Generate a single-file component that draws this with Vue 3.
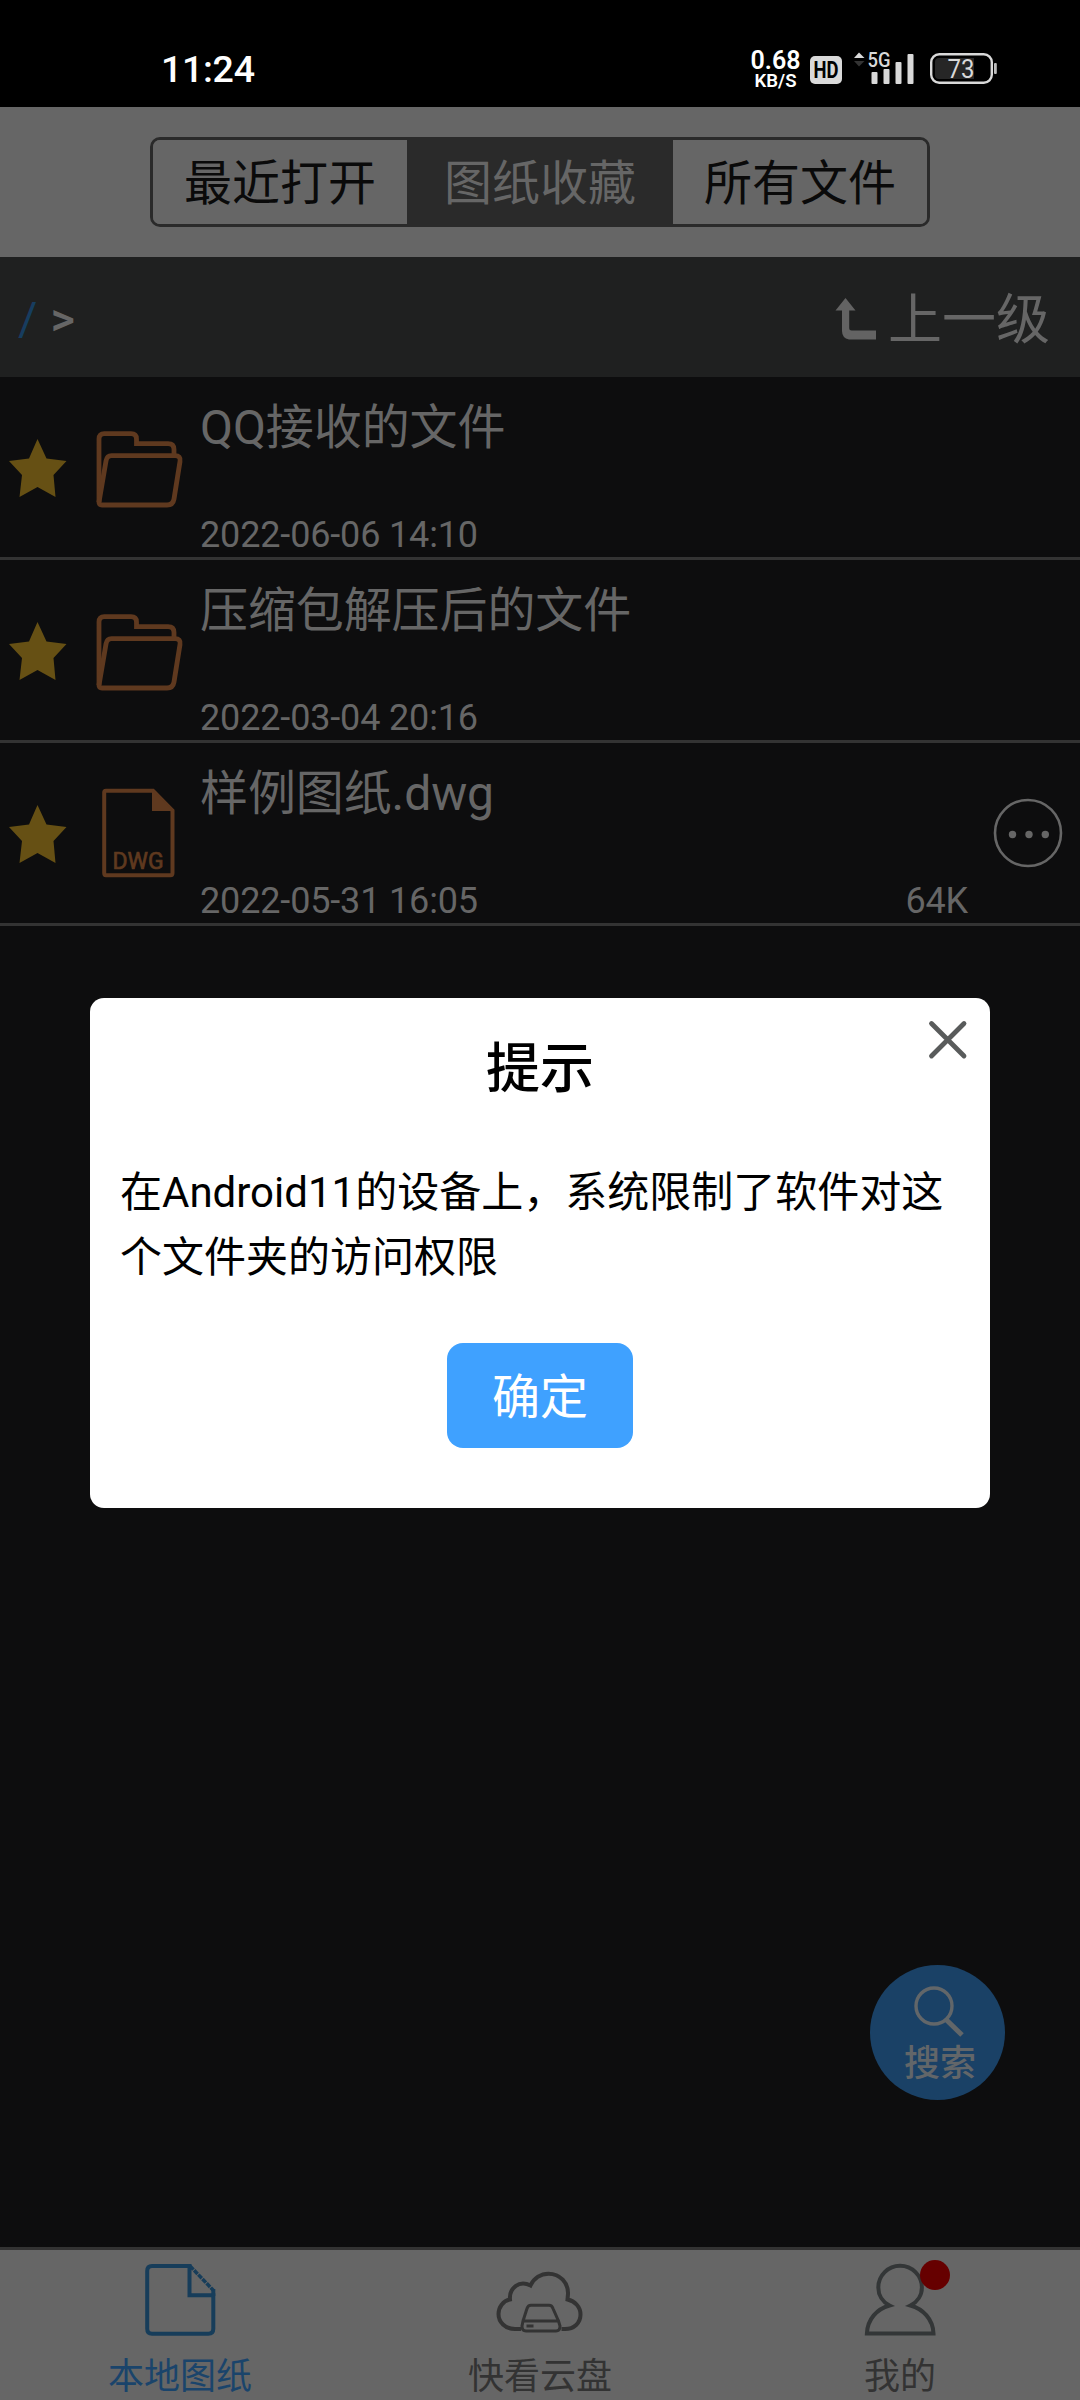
<script setup>
import { ref } from 'vue'

const tabs = ['最近打开', '图纸收藏', '所有文件']
const activeTab = ref(1)
const files = [
  { name: 'QQ接收的文件', date: '2022-06-06 14:10', type: 'folder' },
  { name: '压缩包解压后的文件', date: '2022-03-04 20:16', type: 'folder' },
  { name: '样例图纸.dwg', date: '2022-05-31 16:05', type: 'dwg', size: '64K' },
]
</script>

<template>
  <div class="screen">
    <header class="status">
      <span class="clock">11:24</span>
      <svg class="indicators" width="250" height="50" viewBox="750 45 250 50">
        <g fill="#fff" font-weight="600">
          <text x="750.5" y="69" font-size="25.500" textLength="50" lengthAdjust="spacingAndGlyphs">0.68</text>
          <text x="754.5" y="86.500" font-size="18.500" textLength="42" lengthAdjust="spacingAndGlyphs">KB/S</text>
        </g>
        <rect x="810" y="56" width="32" height="28" rx="5" fill="#d9d9d9" />
        <text x="813.5" y="78" font-size="23" font-weight="700" textLength="25" lengthAdjust="spacingAndGlyphs" fill="#000">HD</text>
        <path d="M854 58L859 52.500L864.500 58Z" fill="#d9d9d9" />
        <path d="M854 61H864.500L859 66.500Z" fill="#333" />
        <text x="867.5" y="67" font-size="21" font-weight="500" textLength="23" lengthAdjust="spacingAndGlyphs" fill="#d9d9d9">5G</text>
        <g fill="#d9d9d9">
          <rect x="871.5" y="72" width="6" height="12" rx="1" />
          <rect x="883.5" y="69" width="6" height="15" rx="1" />
          <rect x="895.5" y="62" width="6" height="22" rx="1" />
          <rect x="907.5" y="54" width="6" height="30" rx="1" />
        </g>
        <rect x="931.2" y="54.200" width="60.600" height="28.600" rx="8" fill="none" stroke="#d9d9d9" stroke-width="2.400" />
        <path d="M939 58H974V79H939Q935 79 935 75V62Q935 58 939 58Z" fill="#262626" />
        <text x="947.5" y="77.500" font-size="26" textLength="27" lengthAdjust="spacingAndGlyphs" fill="#d9d9d9">73</text>
        <rect x="994" y="63" width="2.800" height="11" rx="1" fill="#bbb" />
      </svg>
    </header>

    <div class="topbar">
      <div class="segments">
        <button
          v-for="(tab, i) in tabs"
          :key="tab"
          class="segment"
          :class="{ active: i === activeTab }"
          @click="activeTab = i"
        >{{ tab }}</button>
      </div>
    </div>

    <div class="pathbar">
      <div class="crumbs"><span class="root">/</span><span class="sep">&gt;</span></div>
      <div class="up">
        <svg width="44" height="44" viewBox="0 0 44 44">
          <path d="M11.500 1L21.500 13.500H15.200V31Q15.200 33.500 17.700 33.500H42V42.500H15Q8 41 8 34V13.500H1.500Z" fill="#636363" />
        </svg>
        <span>上一级</span>
      </div>
    </div>

    <main class="list">
      <article v-for="file in files" :key="file.name" class="row">
        <svg class="star" width="58" height="60" viewBox="0 0 58 60">
          <path d="M28.500 1L37.500 20.500L57.500 23L44.500 37L46.500 59L28.500 49L10.500 59L13 37L0 23L20 20.500Z" fill="#665014" />
        </svg>
        <div class="kind">
          <svg v-if="file.type === 'folder'" width="90" height="80" viewBox="0 0 90 80" fill="none" stroke="#5f391f" stroke-width="4.800">
            <path d="M4 72V9Q4 3.700 9.300 3.700H36Q41.500 3.700 41.500 9V13.700H73Q79 13.700 79 19.500V26" />
            <path d="M4 72L11 31Q12 25.700 16.500 25.700H80Q86 25.700 85 31.500L79 69Q78 75 72 75H7Q4 75 4 72Z" />
          </svg>
          <svg v-else class="dwg" width="78" height="94" viewBox="0 0 78 94">
            <path d="M6 4.700H53L72.500 24.500V87Q72.500 89.200 70.500 89.200H6Q4.200 89.200 4.200 87V6.500Q4.200 4.700 6 4.700Z" fill="none" stroke="#5f391f" stroke-width="4" />
            <path d="M52 4L74 25H52Z" fill="#5f391f" />
            <text x="12.500" y="82.500" font-size="23" textLength="51" lengthAdjust="spacingAndGlyphs" fill="#5f391f" stroke="#5f391f" stroke-width=".7">DWG</text>
          </svg>
        </div>
        <div class="info">
          <div class="name">{{ file.name }}</div>
          <div class="meta"><span>{{ file.date }}</span><span>{{ file.size }}</span></div>
        </div>
        <div class="more">
          <svg v-if="file.size" width="70" height="70" viewBox="0 0 70 70" fill="#666">
            <circle cx="35" cy="35" r="33" fill="none" stroke="#666" stroke-width="2.600" />
            <circle cx="19.500" cy="36.500" r="3.700" /><circle cx="36" cy="36.500" r="3.700" /><circle cx="52.300" cy="36.500" r="3.700" />
          </svg>
        </div>
      </article>
    </main>

    <nav class="nav">
      <div class="nav-item current">
        <svg width="74" height="76" viewBox="0 0 74 76" fill="none" stroke="#173d5a" stroke-width="4">
          <path d="M46.500 4H9Q4.200 4 4.200 9V66.700Q4.200 71.700 9 71.700H65.300Q70.300 71.700 70.300 66.700V33.300H46.500Z" />
          <path d="M70.300 34V27" />
          <path d="M47 4L70 28" stroke-width="3.500" stroke-dasharray="5 1" />
        </svg>
        <span>本地图纸</span>
      </div>
      <div class="nav-item">
        <svg class="cloud" width="90" height="64" viewBox="0 0 90 64" fill="none" stroke="#333" stroke-width="4">
          <path d="M26 59H20C10 59 3.500 52 3.500 44C3.500 37 8 31 15 29.500C14 18.500 24 9.500 35.500 15.500C39 8 46 3.700 53.500 3.700C65 3.700 73.500 13 73 24L72.500 29.500C80 31 85.500 37 85.500 44.500C85.500 53 79 59 70 59H66.500" />
          <path d="M28 51L32 38.500Q33 35.300 36 35.300H54Q57 35.300 58 38.500L63.500 51M28 51H63.500L65 56Q65 61 61 61H31Q27 61 27 56Z" stroke-width="3" />
          <path d="M31.500 56H38.500" stroke-width="3" />
        </svg>
        <span>快看云盘</span>
      </div>
      <div class="nav-item">
        <div class="avatar">
          <svg width="74" height="76" viewBox="0 0 74 76" fill="none" stroke="#333637" stroke-width="4">
            <path d="M26.500 43.500C19.500 40 15.300 33 15.300 25.500A21.800 21.800 0 0 1 58.900 25.500C58.900 33 54.500 40 47.500 43.500C60 47 70 57 70.500 71.500H3.900C4.500 57 14 47 26.500 43.500Z" />
          </svg>
          <i class="badge"></i>
        </div>
        <span>我的</span>
      </div>
    </nav>

    <button class="search">
      <svg width="54" height="54" viewBox="0 0 54 54" fill="none" stroke="#626669">
        <circle cx="21" cy="21" r="18" stroke-width="3.400" />
        <path d="M33 34.500L49 50" stroke-width="5" />
      </svg>
      <span>搜索</span>
    </button>

    <section class="dialog">
      <svg class="close" width="40" height="40" viewBox="0 0 40 40" stroke="#595b5b" stroke-width="4.800" stroke-linecap="round">
        <path d="M3.500 3.500L36 36M36 3.500L3.500 36" />
      </svg>
      <h2>提示</h2>
      <p>在Android11的设备上，系统限制了软件对这个文件夹的访问权限</p>
      <button class="ok">确定</button>
    </section>
  </div>
</template>

<style>
body {
  background: #0c0d0e;
}
</style>

<style scoped>
* {
  box-sizing: border-box;
}
.screen {
  position: relative;
  display: flex;
  flex-direction: column;
  width: 1080px;
  height: 2400px;
  overflow: hidden;
  background: #0d0d0e;
  color: #666;
  font-family: Roboto, "Noto Sans CJK SC", sans-serif;
}
svg {
  display: block;
  flex: none;
}
button {
  padding: 0;
  border: 0;
  font-family: inherit;
}
.status {
  display: flex;
  justify-content: space-between;
  align-items: flex-start;
  height: 107px;
  padding: 45px 80px 0 161px;
  background: #000;
}
.clock {
  color: #fff;
  font-size: 37.5px;
  font-weight: 500;
  line-height: 48px;
  letter-spacing: -0.3px;
}
.topbar {
  display: flex;
  justify-content: center;
  align-items: flex-start;
  height: 150px;
  padding-top: 30px;
  background: #666;
}
.segments {
  display: grid;
  grid-template-columns: 254px 266px 254px;
  width: 780px;
  height: 90px;
  border: 3px solid #2a2a2a;
  border-radius: 10px;
  overflow: hidden;
}
.segment {
  padding-top: 4px;
  background: #666;
  color: #0a0a0a;
  font-size: 48px;
  line-height: 80px;
}
.segment.active {
  background: #2a2a2a;
  color: #666;
}
.segment:not(.active) {
  padding-top: 4px;
}
.pathbar {
  display: flex;
  justify-content: space-between;
  align-items: center;
  height: 120px;
  padding: 0 30px 0 18px;
  background: #1f2020;
}
.crumbs {
  display: flex;
  gap: 13px;
  padding-top: 3px;
  font-size: 47px;
  line-height: 60px;
}
.root {
  color: #173d5f;
}
.sep {
  font-weight: 500;
}
.up {
  display: flex;
  align-items: center;
  gap: 10px;
  font-size: 54px;
  line-height: 72px;
}
.up svg {
  margin-top: 4px;
}
.up span {
  padding-top: 7px;
}
.list {
  flex: 1;
}
.row {
  display: flex;
  align-items: center;
  height: 183px;
  padding: 0 17px 0 9px;
  border-bottom: 3px solid #333;
}
.kind {
  display: flex;
  width: 105px;
  margin-left: 28px;
}
.star {
  margin-top: 1px;
}
.kind svg {
  margin-top: 5px;
}
.kind .dwg {
  margin: 0 0 0 5px;
}
.info {
  display: flex;
  flex: 1;
  flex-direction: column;
  justify-content: space-between;
  height: 180px;
  padding: 21px 1px 1px 0;
}
.name {
  font-size: 48px;
  line-height: 60px;
  letter-spacing: -0.1px;
}
.meta {
  display: flex;
  justify-content: space-between;
  font-size: 36px;
  line-height: 42px;
  letter-spacing: -0.15px;
}
.more {
  width: 70px;
  margin-left: 24px;
}
.nav {
  display: grid;
  grid-template-columns: repeat(3, 1fr);
  height: 153px;
  border-top: 3px solid #333;
  background: #666;
  color: #333;
}
.nav-item {
  display: flex;
  flex-direction: column;
  align-items: center;
  justify-content: space-between;
  padding: 12px 0 0;
  font-size: 36px;
  line-height: 46px;
}
.current {
  color: #1a446b;
}
.cloud {
  margin-top: 8px;
}
.avatar {
  position: relative;
}
.badge {
  position: absolute;
  top: -2px;
  right: -13px;
  width: 30px;
  height: 30px;
  border-radius: 50%;
  background: #600;
}
.search {
  position: absolute;
  right: 75px;
  bottom: 300px;
  display: flex;
  flex-direction: column;
  align-items: center;
  gap: 4px;
  width: 135px;
  height: 135px;
  padding: 20px 0 0 5px;
  border-radius: 50%;
  background: #1a4166;
  color: #626669;
  font-size: 36px;
  font-weight: 500;
  line-height: 42px;
}
.dialog {
  position: absolute;
  top: 998px;
  left: 90px;
  display: flex;
  flex-direction: column;
  align-items: center;
  width: 900px;
  height: 510px;
  padding: 36px 30px 60px;
  border-radius: 14px;
  background: #fff;
  color: #000;
}
.close {
  position: absolute;
  top: 22px;
  right: 22px;
}
h2 {
  margin: 0;
  font-size: 54px;
  font-weight: 500;
  line-height: 72px;
}
p {
  margin: 54px 0 0;
  width: 840px;
  font-size: 42px;
  line-height: 65px;
}
.ok {
  width: 186px;
  height: 105px;
  margin-top: auto;
  padding-top: 4px;
  border-radius: 16px;
  background: #3fa1ff;
  color: #fff;
  font-size: 48px;
  line-height: 101px;
}
</style>
